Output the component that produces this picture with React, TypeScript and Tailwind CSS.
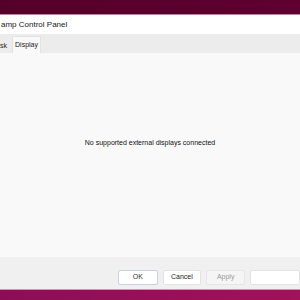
const App = () => {
  return (
    <div
      className="w-[300px] h-[300px] overflow-hidden flex flex-col bg-[#9c0f5c] antialiased"
      style={{ fontFamily: '"Liberation Sans", "Noto Sans", Arial, sans-serif' }}
    >
      <div className="h-[14px] shrink-0 bg-gradient-to-r from-[#55002a] to-[#5f0030]" />
      <div className="flex flex-col h-[275px] shrink-0 bg-[#f9f9f9] border-t border-[#b48aa0]">
        <div className="h-[19px] shrink-0 bg-white flex items-center pl-[1px] text-[8px] text-[#1a1a1a]">
          amp Control Panel
        </div>
        <div className="h-[19px] shrink-0 bg-[#ececec] flex items-end">
          <div className="w-[12px] h-[15px] text-[7px] leading-[15px] text-[#222]">sk</div>
          <div className="w-[29px] h-[17px] bg-[#f9f9f9] border border-b-0 border-[#e2e2e2] text-[7px] leading-[16px] text-center text-[#222]">
            Display
          </div>
        </div>
        <div className="flex-1 flex items-center justify-center pb-[24px]">
          <span className="text-[7px] text-[#111]">No supported external displays connected</span>
        </div>
        <div className="h-[32px] shrink-0 bg-[#f0f0f0] flex items-start gap-[5px] pl-[118px] pt-[13px]">
          <button className="w-[51px] h-[15px] bg-white border border-[#c5d2e4] rounded-[2px] text-[7px] text-[#333]">OK</button>
          <button className="w-[50px] h-[15px] bg-white border border-[#e3e3e3] rounded-[2px] text-[7px] text-[#222]">Cancel</button>
          <button className="w-[50px] h-[15px] bg-[#f5f5f5] border border-[#e6e6e6] rounded-[2px] text-[7px] text-[#9a9a9a]">Apply</button>
          <button className="w-[50px] h-[15px] shrink-0 bg-white border border-[#e3e3e3] rounded-[2px]"></button>
        </div>
      </div>
      <div className="flex-1 border-t border-[#e08bb8] bg-gradient-to-r from-[#8e0c57] to-[#a0125a]" />
    </div>
  );
};

export default App;
